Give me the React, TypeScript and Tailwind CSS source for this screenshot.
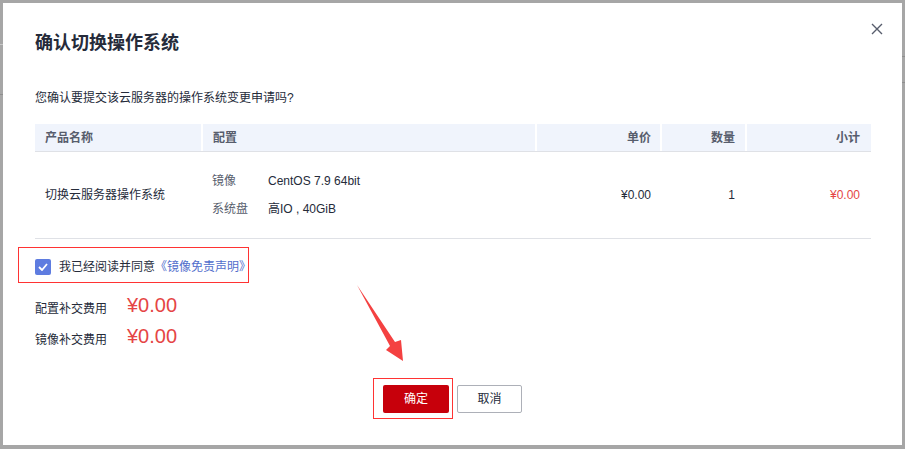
import React from 'react';

const font = { fontFamily: '"Liberation Sans", "Noto Sans CJK SC", sans-serif' };

function CloseIcon() {
  return (
    <svg width="12" height="12" viewBox="0 0 12 12" className="text-[#575d6c]">
      <path d="M1 1L11 11M11 1L1 11" stroke="currentColor" strokeWidth="1.4" fill="none" />
    </svg>
  );
}

function Arrow() {
  return (
    <svg className="absolute left-0 top-0 pointer-events-none" width="905" height="449">
      <polygon
        points="357,285 395,342 401,340 403,361 386,350 390,346"
        fill="#f44141"
      />
    </svg>
  );
}

export default function App() {
  return (
    <div className="relative w-[905px] h-[449px] bg-[#a6a6a6] overflow-hidden" style={font}>
      <div className="absolute left-0 top-[44px] w-[3px] h-px bg-[#c8c8c8]" />
      <div className="absolute left-0 top-[94px] w-[3px] h-px bg-[#8e8e8e]" />
      <div className="absolute right-0 top-[56px] w-[3px] h-px bg-[#8e8e8e]" />
      <div className="absolute right-0 top-[82px] w-[3px] h-px bg-[#8e8e8e]" />

      <div className="ml-[3px] mt-[3px] w-[899px] h-[442px] bg-white relative px-[32px] pt-[28px]">
        <button className="absolute right-[19px] top-[20px] w-[12px] h-[12px] flex items-center justify-center">
          <CloseIcon />
        </button>

        <h1 className="text-[18px] leading-[24px] font-bold text-[#252b3a]">确认切换操作系统</h1>

        <p className="mt-[34px] text-[12px] leading-[18px] text-[#252b3a]">
          您确认要提交该云服务器的操作系统变更申请吗?
        </p>

        <div className="mt-[17px] w-[836px] text-[12px] text-[#252b3a]">
          <div className="grid grid-cols-[166px_334px_125px_85px_126px] h-[28px] bg-[#f0f4fc] border-b border-[#dfe1e6] font-bold text-[#575d6c]">
            <div className="pl-[10px] flex items-center">产品名称</div>
            <div className="pl-[10px] flex items-center border-l-2 border-white">配置</div>
            <div className="pr-[9px] flex items-center justify-end border-l-2 border-white">单价</div>
            <div className="pr-[10px] flex items-center justify-end border-l-2 border-white">数量</div>
            <div className="pr-[11px] flex items-center justify-end border-l-2 border-white">小计</div>
          </div>
          <div className="grid grid-cols-[166px_334px_125px_85px_126px] h-[87px] border-b border-[#dfe1e6]">
            <div className="pl-[10px] flex items-center">切换云服务器操作系统</div>
            <div className="pl-[11px] flex flex-col justify-center gap-[10px]">
              <div className="flex leading-[18px]">
                <span className="w-[56px] text-[#575d6c]">镜像</span>
                <span>CentOS 7.9 64bit</span>
              </div>
              <div className="flex leading-[18px]">
                <span className="w-[56px] text-[#575d6c]">系统盘</span>
                <span>高IO , 40GiB</span>
              </div>
            </div>
            <div className="pr-[9px] flex items-center justify-end">¥0.00</div>
            <div className="pr-[10px] flex items-center justify-end">1</div>
            <div className="pr-[11px] flex items-center justify-end text-[#e54545]">¥0.00</div>
          </div>
        </div>

        <div className="relative mt-[20px] flex items-center h-[16px]">
          <div className="absolute left-[-17px] top-[-12px] w-[231px] h-[36px] border border-[#f33]" />
          <div className="w-[16px] h-[16px] rounded-[2px] bg-[#5e7ce0] flex items-center justify-center">
            <svg width="10" height="8" viewBox="0 0 10 8">
              <path d="M1 4L4 7L9 1" stroke="white" strokeWidth="1.8" fill="none" />
            </svg>
          </div>
          <span className="ml-[8px] text-[12px] text-[#252b3a]">
            我已经阅读并同意<span className="text-[#526ecc]">《镜像免责声明》</span>
          </span>
        </div>

        <div className="mt-[18px] flex flex-col gap-[7px]">
          <div className="flex items-center h-[24px]">
            <span className="w-[92px] text-[12px] text-[#252b3a] pt-[7px]">配置补交费用</span>
            <span className="text-[20px] text-[#e54545] leading-[24px]">¥0.00</span>
          </div>
          <div className="flex items-center h-[24px]">
            <span className="w-[92px] text-[12px] text-[#252b3a] pt-[7px]">镜像补交费用</span>
            <span className="text-[20px] text-[#e54545] leading-[24px]">¥0.00</span>
          </div>
        </div>

        <div className="absolute left-0 right-0 top-[382px] flex justify-center gap-[8px] text-[12px]">
          <div className="relative">
            <div className="absolute left-[-10px] top-[-7px] w-[80px] h-[41px] border border-[#f33]" />
            <button className="w-[66px] h-[28px] rounded-[2px] bg-[#c7000b] text-white">确定</button>
          </div>
          <button className="w-[65px] h-[28px] rounded-[2px] border border-[#adb0b8] text-[#252b3a] bg-white">取消</button>
        </div>
      </div>

      <Arrow />
    </div>
  );
}
